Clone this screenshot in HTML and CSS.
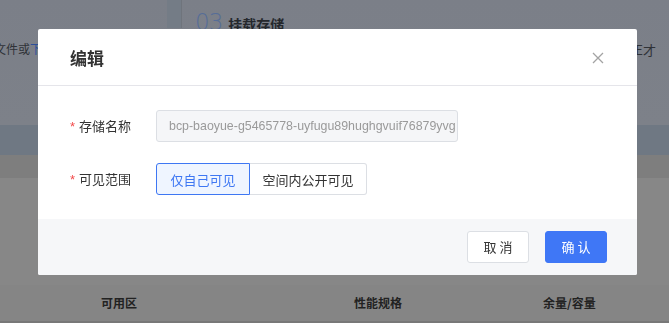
FILE: index.html
```html
<!DOCTYPE html>
<html lang="zh-CN">
<head>
<meta charset="utf-8">
<title>编辑</title>
<link rel="stylesheet" href="styles.css">
</head>
<body>
<div class="page">
  <div class="top">
    <div class="steps">
      <div class="step-left"><span class="tip">文件或<span class="link">下</span></span></div>
      <div class="stripe"></div>
      <div class="step-right">
        <div class="step-title"><span class="num">03</span><span class="name">挂载存储</span></div>
        <span class="tip-r">E才</span>
      </div>
    </div>
  </div>
  <div class="band"></div>
  <div class="gap1"></div>
  <div class="gap2"></div>
  <div class="thead">
    <span class="th th1">可用区</span>
    <span class="th th2">性能规格</span>
    <span class="th th3">余量/容量</span>
  </div>
</div>

<div class="modal">
  <div class="modal-header">
    <span class="modal-title">编辑</span>
    <svg class="close" width="12" height="12" viewBox="0 0 12 12"><path d="M1 1 L11 11 M11 1 L1 11" stroke="#a3a3a3" stroke-width="1.3" fill="none"/></svg>
  </div>
  <div class="modal-body">
    <div class="form-row">
      <label class="form-label"><span class="req">*</span>存储名称</label>
      <div class="input">bcp-baoyue-g5465778-uyfugu89hughgvuif76879yvg</div>
    </div>
    <div class="form-row">
      <label class="form-label"><span class="req">*</span>可见范围</label>
      <div class="radio-group">
        <span class="radio active">仅自己可见</span>
        <span class="radio">空间内公开可见</span>
      </div>
    </div>
  </div>
  <div class="modal-footer">
    <span class="btn">取 消</span>
    <span class="btn primary">确 认</span>
  </div>
</div>
</body>
</html>
```
FILE: styles.css
```css
* { box-sizing: border-box; }
html, body { margin: 0; padding: 0; }
body {
  width: 669px;
  height: 323px;
  overflow: hidden;
  font-family: "Liberation Sans", "Noto Sans CJK SC", sans-serif;
  background: #878787;
}
.page { display: flex; flex-direction: column; height: 323px; }
.top {
  height: 125px;
  background: linear-gradient(180deg, #7b7f88 0%, #7d8189 100%);
}
.steps { display: flex; height: 100%; }
.step-left { width: 167px; padding-top: 40px; overflow: hidden; white-space: nowrap; }
.tip { display: inline-block; font-size: 12px; color: #2f3237; margin-left: -6px; font-family: "Noto Sans CJK SC", sans-serif; }
.link { color: #2c4f9a; }
.stripe { width: 15px; height: 28px; background: #747c86; border-right: 1px solid #6f747c; }
.step-right { flex: 1; display: flex; justify-content: space-between; padding-left: 13px; }
.step-title { display: flex; align-items: baseline; height: 33px; padding-top: 9px; }
.num { font-family: "DejaVu Sans", sans-serif; font-size: 23px; font-weight: 300; color: #566d97; letter-spacing: -1px; }
.name { font-size: 14px; font-weight: bold; color: #25282d; margin-left: 6px; font-family: "Noto Sans CJK SC", sans-serif; }
.tip-r { font-size: 13px; color: #2f3237; padding-top: 40px; margin-right: 13px; font-family: "Noto Sans CJK SC", sans-serif; }
.band { height: 30px; background: #6f7883; }
.gap1 { height: 23px; background: #7e7e7e; }
.gap2 { height: 107px; background: #878787; }
.thead {
  flex: 1;
  display: flex;
  align-items: center;
  background: #858585;
  border-bottom: 2px solid #787878;
  font-family: "Noto Sans CJK SC", sans-serif;
  font-size: 12px;
  font-weight: bold;
  color: #222;
  padding-bottom: 2px;
}
.th1 { margin-left: 101px; width: 253px; }
.th2 { width: 189px; }

.modal {
  position: fixed;
  left: 38px;
  top: 29px;
  width: 599px;
  height: 246px;
  background: #fff;
  border-radius: 2px;
  display: flex;
  flex-direction: column;
  overflow: hidden;
}
.modal-header {
  height: 57px;
  border-bottom: 1px solid #e5e5ea;
  display: flex;
  align-items: center;
  justify-content: space-between;
  padding: 0 33px 0 32px;
}
.modal-title {
  font-family: "Noto Sans CJK SC", sans-serif;
  font-size: 17px;
  font-weight: bold;
  color: #333;
}
.close { display: block; margin-top: 1px; }
.modal-body {
  padding: 24px 32px 24px 32px;
  display: flex;
  flex-direction: column;
  gap: 21px;
  flex: 0 0 auto;
}
.form-row { display: flex; align-items: center; height: 32px; }
.form-label {
  width: 86px;
  font-family: "Noto Sans CJK SC", sans-serif;
  font-size: 13px;
  color: #333;
  margin-top: -2px;
}
.req { color: #f24b4b; margin-right: 4px; font-family: "Liberation Sans", sans-serif; }
.input {
  width: 302px;
  height: 32px;
  background: #f5f6f8;
  border: 1px solid #dcdfe4;
  border-radius: 3px;
  padding: 0 0 0 12px;
  font-size: 12.4px;
  line-height: 30px;
  color: #9a9a9a;
  white-space: nowrap;
  overflow: hidden;
}
.radio-group { display: flex; height: 32px; }
.radio {
  height: 32px;
  display: flex;
  align-items: center;
  justify-content: center;
  border: 1px solid #dcdfe4;
  font-family: "Noto Sans CJK SC", sans-serif;
  font-size: 13px;
  color: #333;
  width: 117px;
  border-radius: 0 3px 3px 0;
  border-left: none;
}
.radio.active {
  width: 94px;
  color: #3e77f3;
  background: #eff5ff;
  border: 1px solid #3e77f3;
  border-radius: 3px 0 0 3px;
}
.modal-footer {
  flex: 1;
  background: #f6f7f9;
  display: flex;
  align-items: center;
  justify-content: flex-end;
  gap: 16px;
  padding: 0 30px 1px 0;
}
.btn {
  width: 62px;
  height: 32px;
  display: flex;
  align-items: center;
  justify-content: center;
  border: 1px solid #dcdfe4;
  border-radius: 3px;
  background: #fff;
  font-family: "Noto Sans CJK SC", sans-serif;
  font-size: 13px;
  color: #333;
}
.btn.primary {
  background: #3f77f6;
  border-color: #3f77f6;
  color: #fff;
}
```
